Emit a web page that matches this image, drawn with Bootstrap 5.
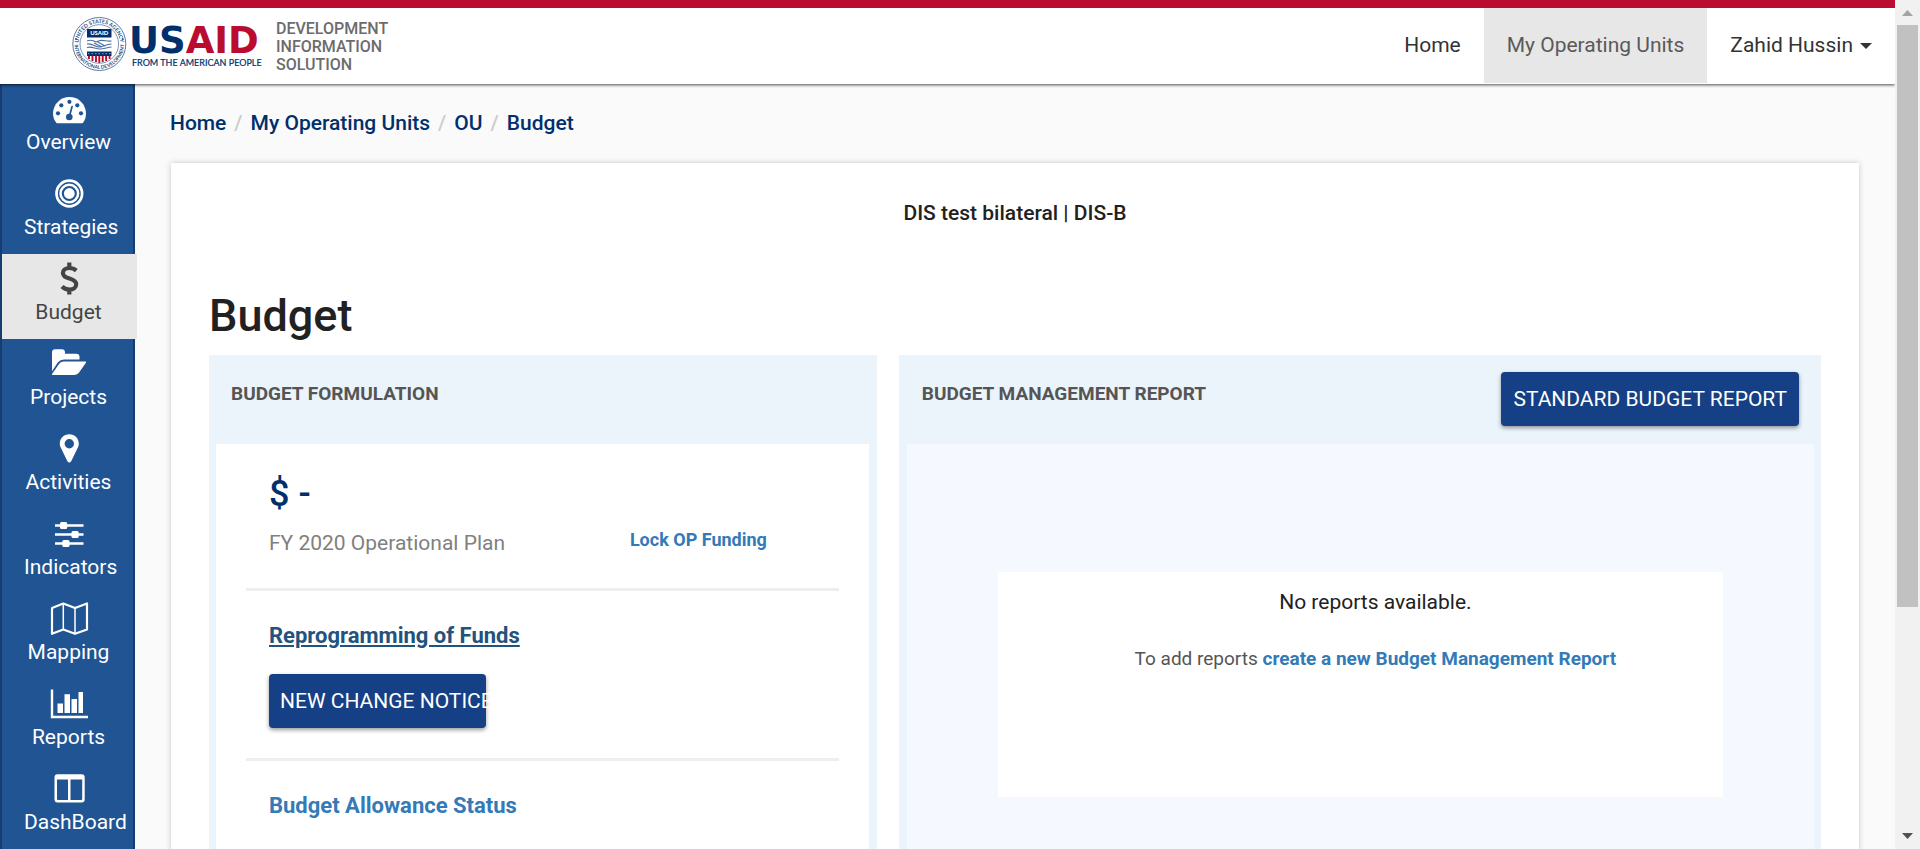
<!DOCTYPE html>
<html lang="en">
<head>
<meta charset="utf-8">
<meta name="viewport" content="width=device-width, initial-scale=1">
<title>Budget | Development Information Solution</title>
<link href="https://cdn.jsdelivr.net/npm/bootstrap@5.3.0/dist/css/bootstrap.min.css" rel="stylesheet">
<style>
  body { font-family: Roboto, "Liberation Sans", sans-serif; font-size: 21px; line-height: 24px; color: #212121; background: #fafafa; }
  a { color: #337ab7; text-decoration: none; }
  .topbar { border-top: 8px solid #ba0c2f; background: #fff; height: 84px; box-shadow: 0 1px 3px rgba(0,0,0,.7); z-index: 1; }
  .brand-name { color: #6c6c6c; font-size: 16px; line-height: 18px; font-weight: 500; margin-left: 14px; }
  .topnav .nav-link { color: #333; padding: 25px 23px 26px; }
  .topnav .nav-link.active { background: #e7e7e7; color: #5a5a5a; }
  .topnav .dropdown-toggle::after { border-top-width: 6px; border-left-width: 6px; border-right-width: 6px; margin-left: 7px; vertical-align: 3px; }
  .sidebar { width: 135px; flex: none; background: #205493; border: solid #163c70; border-width: 0 2px; }
  .sidebar .nav-link { height: 85px; padding: 8px 20px 0 22px; color: #fff; text-align: center; white-space: nowrap; }
  .sidebar .nav-link.active { background: #e7e7e7; color: #444; margin-right: -4px; padding-right: 24px; }
  .sidebar svg { display: block; margin: 0 auto 2px; }
  .crumbs { padding: 27px 35px 28px; font-weight: 500; }
  .crumbs a { color: #002f6c; }
  .crumbs .breadcrumb { --bs-breadcrumb-divider-color: #ccc; --bs-breadcrumb-item-padding-x: 8px; font-size: 21px; }
  .sheet { margin: 0 36px; background: #fff; box-shadow: 0 0 6px rgba(0,0,0,.2); padding: 38px 38px 0; }
  .sheet h1 { font-size: 45px; line-height: 54px; font-weight: 500; margin: 64px 0 12px; }
  .unit { font-weight: 500; }
  .panels { display: grid; grid-template-columns: 42fr 58fr; gap: 22px; }
  .panel { display: flex; flex-direction: column; background: #ebf3fb; padding: 0 8px 0 7px; }
  .panel-wide { padding: 0 7px 0 8px; }
  .panel-top { height: 89px; padding: 17px 15px; }
  .panel-top h2 { font-size: 19px; line-height: 24px; font-weight: 700; color: #555; margin: 10px 0 0; }
  .main-btn { background: #154085; color: #fff; font-size: 21px; line-height: 24px; border: 0; border-radius: 4px; height: 54px; padding: 0 12px; white-space: nowrap; box-shadow: 0 2px 4px rgba(0,0,0,.4); }
  .main-btn:hover { background: #10356f; color: #fff; }
  .notice-btn { width: 217px; text-align: left; margin: 26px 0 6px; padding: 0 11px; }
  .panel-body { background: #fff; padding: 0 30px; flex-grow: 1; }
  .part { padding: 33px 23px 24px; border-bottom: 3px solid #eee; }
  .part:first-child { padding-top: 28px; }
  .part:last-child { border-bottom: 0; }
  .amount { font-size: 36px; line-height: 44px; font-weight: 500; color: #002f6c; }
  .plan-row { margin: 15px 0 9px; }
  .plan { color: #808080; width: 66%; }
  .lock { font-size: 18px; line-height: 18px; font-weight: 700; }
  .part-link { font-size: 22px; font-weight: 700; }
  .part-link.hovered { color: #23527c; text-decoration: underline; }
  .reports { background: #f5f9ff; padding: 128px 10% 0; height: 480px; }
  .empty { background: #fff; height: 225px; padding: 18px 0 0 30px; text-align: center; }
  .hint { font-size: 19px; color: #555; margin-top: 33px; }
  .hint a { font-weight: 700; }
  .scroller { width: 25px; flex: none; background: #f1f1f1; }
  .scroller .thumb { background: #c1c1c1; height: 582px; margin: 0 2px; }
</style>
</head>
<body>
<div class="d-flex vh-100 overflow-hidden">
  <div class="d-flex flex-column flex-grow-1 overflow-hidden">
    <header class="topbar d-flex justify-content-between flex-shrink-0">
      <a href="#" class="d-flex align-items-start ps-5 ms-4">
        <svg width="190" height="70" viewBox="72 10 190 70" role="img" aria-label="USAID, from the American people">
          <defs>
            <path id="arcTop" d="M78.500 46a20.800 20.800 0 0 1 41.600 0"/>
            <path id="arcLow" d="M74.500 46a24.800 24.800 0 0 0 49.600 0"/>
          </defs>
          <circle cx="99.300" cy="46" r="26.500" fill="#fff" stroke="#5c7ba5" stroke-width="1"/>
          <circle cx="99.300" cy="46" r="19.300" fill="none" stroke="#5c7ba5" stroke-width=".8"/>
          <g font-family="Lato, sans-serif" font-weight="700" font-size="5.300" fill="#27508a" text-anchor="middle">
            <text><textPath href="#arcTop" startOffset="50%">UNITED STATES AGENCY</textPath></text>
            <text font-size="4.900"><textPath href="#arcLow" startOffset="50%">INTERNATIONAL DEVELOPMENT</textPath></text>
          </g>
          <circle cx="76" cy="41" r="1" fill="#27508a"/><circle cx="122.600" cy="41" r="1" fill="#27508a"/>
          <path d="M87 31h24.500v8.500H87z" fill="#002f6c"/>
          <text x="99.300" y="37.300" text-anchor="middle" font-family="Lato, sans-serif" font-weight="900" font-size="6" fill="#fff">USAID</text>
          <path d="M87 43c4-1.500 6-1 9 1l4-1.500c4-.5 7 1 11.500.5M87 46c5-1 8 3 12 3s7-3 12.500-3M87 49.500c5-1.500 8 1.500 13 1.500 4 0 7-1.500 11.500-2M94 45l8 4M97 43.500l8 4.500" fill="none" stroke="#4a6f9f" stroke-width="1.100"/>
          <path d="M87 53.500h24.500v4.500H87z" fill="#002f6c"/>
          <path d="M88 55.700h23" stroke="#8da6c6" stroke-width="1" stroke-dasharray="1.500 2"/>
          <path d="M87.500 58h23.500c0 3-4 5-11.700 6.800C91.500 63 87.500 61 87.500 58z" fill="#fff"/>
          <path d="M89 58v3M92.500 58v5M96 58v6M99.300 58v7M102.700 58v6M106.100 58v5M109.600 58v3" stroke="#ba0c2f" stroke-width="1.900"/>
          <text x="129" y="55" font-family="'DejaVu Sans', sans-serif" font-weight="700" font-size="37" fill="#002f6c">US<tspan fill="#ba0c2f">AID</tspan></text>
          <text x="132" y="68" font-family="Lato, sans-serif" font-weight="400" font-size="9" fill="#002f6c" stroke="#002f6c" stroke-width=".2">FROM THE AMERICAN PEOPLE</text>
        </svg>
        <span class="brand-name d-block mt-1 pt-2">DEVELOPMENT<br>INFORMATION<br>SOLUTION</span>
      </a>
      <nav class="topnav nav flex-nowrap">
        <a class="nav-link" href="#">Home</a>
        <a class="nav-link active mb-auto" href="#">My Operating Units</a>
        <a class="nav-link dropdown-toggle" href="#" role="button" data-bs-toggle="dropdown">Zahid Hussin</a>
      </nav>
    </header>

    <div class="d-flex flex-grow-1 overflow-hidden">
      <nav class="sidebar nav flex-column flex-nowrap">
        <a class="nav-link" href="#"><svg width="40" height="36" viewBox="0 0 40 36"><path d="M7.300 30.800C5.200 28 4 25 4 21.500 4 12.500 11.300 5 20.500 5S37 12.500 37 21.500c0 3.500-1 6.500-3 9.300q-.5.500-1 .5H8.300q-.6 0-1-.5z" fill="#fff"/><g fill="#205493"><circle cx="9" cy="21.300" r="2.100"/><circle cx="12.300" cy="13.300" r="2.100"/><circle cx="20.400" cy="9.800" r="2.100"/><circle cx="28.300" cy="13.300" r="2.100"/><circle cx="32" cy="21.300" r="2.100"/><circle cx="20.300" cy="25" r="3.300"/></g><path d="M20.500 24l2.600-9.500" stroke="#205493" stroke-width="1.700" stroke-linecap="round"/></svg>Overview</a>
        <a class="nav-link" href="#"><svg width="40" height="36" viewBox="0 0 40 36"><g fill="none" stroke="#fff"><circle cx="20.300" cy="16.500" r="12.800" stroke-width="2.700"/><circle cx="20.300" cy="16.500" r="8.800" stroke-width="2.500"/></g><circle cx="20.300" cy="16.500" r="5.400" fill="#fff"/></svg>Strategies</a>
        <a class="nav-link active" href="#"><svg width="40" height="36" viewBox="0 0 40 36"><path d="M27.300 8.600C25.600 7 23.300 6 20.500 6c-4 0-6.600 2-6.600 5 0 3.300 3 4.500 6.600 5.500 3.700 1.100 6.700 2.300 6.700 5.700 0 3.300-2.700 5.300-6.700 5.300-3 0-5.700-1-7.500-3M20.300.5V6M20.300 27v5.500" fill="none" stroke="#444" stroke-width="4.200"/></svg>Budget</a>
        <a class="nav-link" href="#"><svg width="40" height="36" viewBox="0 0 40 36"><path d="M3 24.300V5.500Q3 2.300 6.200 2.300h6.600q3.200 0 3.200 3.200v1.200h11.300q3.200 0 3.200 3.200v2.700H15q-3.700 0-6.200 3z" fill="#fff"/><path d="M3.800 27.900q-1.500 0-.6-1.200l7-10q1.600-2.200 4.500-2.200h21.600q1.500 0 .6 1.300l-6.800 9.800q-1.700 2.300-4.700 2.300z" fill="#fff"/></svg>Projects</a>
        <a class="nav-link" href="#"><svg width="40" height="36" viewBox="0 0 40 36"><path fill-rule="evenodd" d="M20.300 2.300c5.400 0 9.500 4.100 9.500 9.400q0 2-.8 3.600l-6.800 14q-1.900 2.400-3.800 0l-6.800-14q-.8-1.600-.8-3.600c0-5.300 4.100-9.400 9.500-9.400zm0 4.700a4.700 4.700 0 1 0 0 9.400 4.700 4.700 0 0 0 0-9.400z" fill="#fff"/></svg>Activities</a>
        <a class="nav-link" href="#"><svg width="40" height="36" viewBox="0 0 40 36"><path d="M6 8.500h28.500M6 17.500h28.500M6 26.500h28.500" stroke="#fff" stroke-width="2.600"/><g fill="#fff"><rect x="11" y="5" width="7.200" height="7" rx="1.500"/><rect x="22.500" y="14" width="7.200" height="7" rx="1.500"/><rect x="13.300" y="23" width="7.200" height="7" rx="1.500"/></g></svg>Indicators</a>
        <a class="nav-link" href="#"><svg width="40" height="36" viewBox="0 0 40 36"><g fill="none" stroke="#fff" stroke-linejoin="round"><path d="M3 6l11.300-4.500L26 6l12-4.500v26L26 31.800 14.300 27.500 3 31.800z" stroke-width="2.200"/><path d="M14.300 1.500v26M26 6v25.800" stroke-width="1.500"/></g></svg>Mapping</a>
        <a class="nav-link" href="#"><svg width="40" height="36" viewBox="0 0 40 36"><path d="M3 2.500V30h36" fill="none" stroke="#fff" stroke-width="2.400"/><path d="M8.500 16.500H14v9.500H8.500zM15.500 7.300H21V26h-5.500zM22.500 12H28v14h-5.500zM29.500 5H34v21h-4.500z" fill="#fff"/></svg>Reports</a>
        <a class="nav-link" href="#"><svg width="40" height="36" viewBox="0 0 40 36"><path fill-rule="evenodd" d="M8.500 2.300h24.200q3 0 3 3v22.300q0 3-3 3H8.500q-3 0-3-3V5.300q0-3 3-3zM8 7.500v19.600q0 1 1 1h10V7.500zm13.500 0v20.600h10.700q1 0 1-1V7.500z" fill="#fff"/></svg>DashBoard</a>
      </nav>

      <main class="flex-grow-1 overflow-hidden">
        <nav class="crumbs" aria-label="breadcrumb">
          <ol class="breadcrumb mb-0">
            <li class="breadcrumb-item"><a href="#">Home</a></li>
            <li class="breadcrumb-item"><a href="#">My Operating Units</a></li>
            <li class="breadcrumb-item"><a href="#">OU</a></li>
            <li class="breadcrumb-item"><a href="#">Budget</a></li>
          </ol>
        </nav>
        <div class="sheet">
          <div class="unit text-center">DIS test bilateral | DIS-B</div>
          <h1>Budget</h1>
          <div class="panels">
            <section class="panel">
              <div class="panel-top"><h2>BUDGET FORMULATION</h2></div>
              <div class="panel-body">
                <div class="part">
                  <div class="amount">$ -</div>
                  <div class="plan-row d-flex align-items-start">
                    <div class="plan">FY 2020 Operational Plan</div>
                    <a class="lock" href="#">Lock OP Funding</a>
                  </div>
                </div>
                <div class="part">
                  <a class="part-link hovered d-block" href="#">Reprogramming of Funds</a>
                  <button type="button" class="btn main-btn notice-btn">NEW CHANGE NOTICE</button>
                </div>
                <div class="part">
                  <a class="part-link d-block" href="#">Budget Allowance Status</a>
                </div>
              </div>
            </section>
            <section class="panel panel-wide">
              <div class="panel-top d-flex justify-content-between align-items-start">
                <h2>BUDGET MANAGEMENT REPORT</h2>
                <button type="button" class="btn main-btn">STANDARD BUDGET REPORT</button>
              </div>
              <div class="reports">
                <div class="empty">
                  <div>No reports available.</div>
                  <div class="hint">To add reports <a href="#">create a new Budget Management Report</a></div>
                </div>
              </div>
            </section>
          </div>
        </div>
      </main>
    </div>
  </div>
  <div class="scroller d-flex flex-column" aria-hidden="true">
    <svg width="25" height="25" viewBox="0 0 25 25"><path d="M7 16l5.500-6 5.500 6z" fill="#a3a3a3"/></svg>
    <div class="thumb"></div>
    <svg class="mt-auto" width="25" height="25" viewBox="0 0 25 25"><path d="M7 9l5.500 6L18 9z" fill="#505050"/></svg>
  </div>
</div>
<script src="https://cdn.jsdelivr.net/npm/bootstrap@5.3.0/dist/js/bootstrap.bundle.min.js"></script>
</body>
</html>
